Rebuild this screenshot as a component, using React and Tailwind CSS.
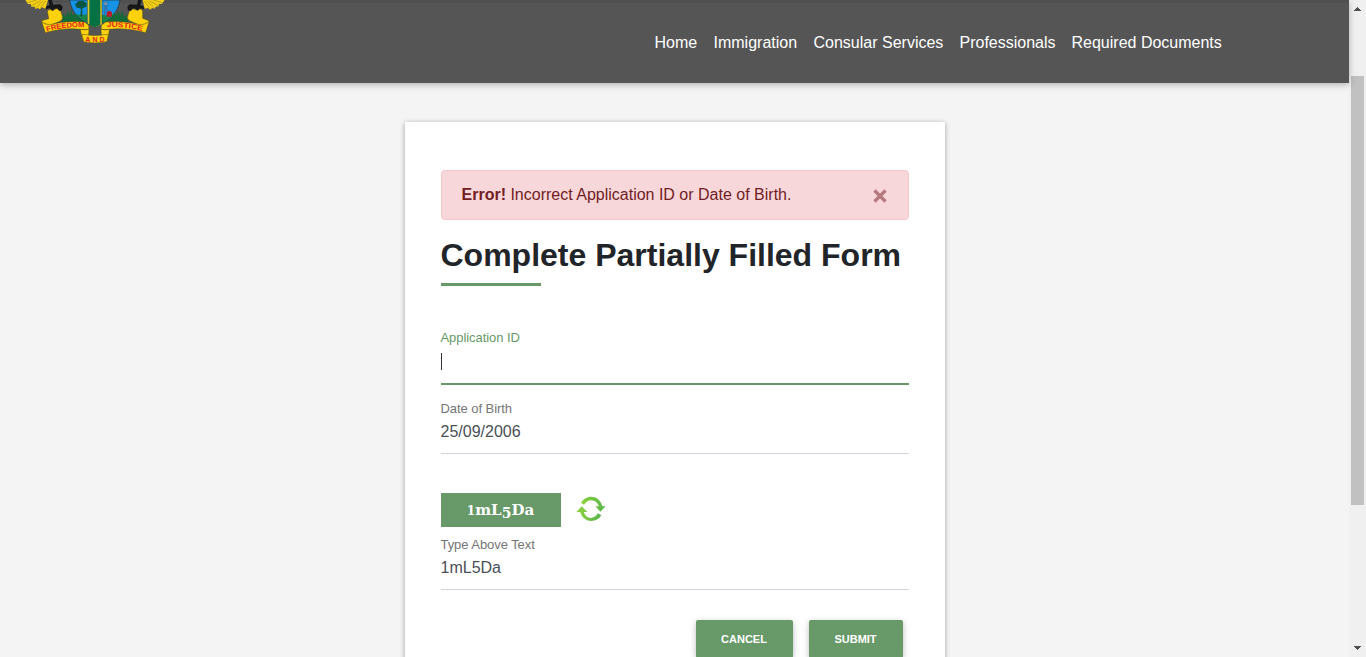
const NAV = [
  ['Home', 'w-[43px]'],
  ['Immigration', 'w-[84px]'],
  ['Consular Services', 'w-[130px]'],
  ['Professionals', 'w-[96px]'],
  ['Required Documents', 'w-[150px]'],
];

function Emblem() {
  return (
    <svg className="block h-[50px] w-[200px] shrink-0" viewBox="0 0 600 150">
      <defs>
        <path id="arcLeft" d="M141 95Q196 78 258 82" />
        <path id="arcRight" d="M320 80Q376 80 436 95" />
      </defs>
      <g id="wings">
        <path d="M76 0H144L136 26L126 22L120 28L113 24L106 27L104 20L94 20L93 13L84 12Z" fill="#f2cf16" />
        <path d="M84 8L110 0M95 17L122 2M107 24L130 2M121 25L137 3" stroke="#8a7a18" strokeWidth="1.5" />
        <path d="M494 0H428L434 26L444 24L450 29L457 24L464 26L467 20L476 19L477 12L486 11Z" fill="#f2cf16" />
        <path d="M486 8L460 0M475 17L448 2M463 24L440 2M449 25L433 3" stroke="#8a7a18" strokeWidth="1.5" />
      </g>
      <path d="M186 62L190 40L197 52L204 30L207 47L216 26L216 46L229 38L262 64L254 70H186Z" fill="#126b39" />
      <path d="M384 64L380 42L373 53L366 30L362 47L353 29L352 46L340 38L310 64L320 70H384Z" fill="#126b39" />
      <path d="M209 0H360Q356 30 332 54Q312 67 285 82Q256 68 237 54Q213 31 209 0Z" fill="#1592e6" stroke="#262c2b" strokeWidth="2" />
      <path d="M224 41Q244 47 262 43V68L238 53Z" fill="#178447" />
      <path d="M306 45Q324 47 345 40Q330 60 306 70Z" fill="#178447" />
      <path d="M241 49L243 26L228 22L226 12L235 3L249 2L260 10L259 20L247 25L247 49Z" fill="#0b5543" />
      <path d="M262 0H306V73L285 82L262 70Z" fill="#dfc629" />
      <path d="M268 0H301V74L285 82L268 74Z" fill="#087143" />
      <path d="M262 0V70M306 0V70" stroke="#243a32" strokeWidth="1.5" />
      <path d="M313 46L316 17H319L323 46M310 4L325 18M325 4L310 18" fill="none" stroke="#425d80" strokeWidth="2.5" />
      <circle cx="317" cy="11" r="5" fill="#7890a4" />
      <path d="M320 50V37L328 32L336 36V50Z" fill="#b91e30" />
      <g fill="#fdd20c" stroke="#514818" strokeWidth="1.5" strokeLinejoin="round">
        <path d="M142 32Q152 25 159 32Q170 21 181 31L187 48Q190 58 180 64L148 77L128 69L124 62L146 56Z" />
        <path d="M428 32Q418 22 410 30Q396 23 388 33L383 49Q379 58 392 64L422 77L441 71L448 63L428 55Z" />
        <path d="M124 62Q133 76 155 73Q200 61 254 66L266 76L267 87Q262 91 243 88Q195 82 136 98Z" />
        <path d="M448 63Q437 76 414 73Q369 61 317 66L304 76L303 87Q309 91 326 88Q378 82 437 98Z" />
        <path d="M241 88Q258 92 267 87L266 106L248 118Q243 103 241 88Z" />
        <path d="M328 88Q311 92 303 87L304 106L323 118Q327 103 328 88Z" />
        <path d="M246 103Q285 110 325 103L321 125Q285 132 251 126Z" />
      </g>
      <path d="M145 0H156L159 14L181 13L188 20L186 31L178 33L171 25L164 26L157 32L149 25L137 28L140 18L149 16Z" fill="#151719" />
      <path d="M425 0H414L411 14L389 13L382 20L384 31L392 33L399 25L406 26L413 32L421 25L433 28L430 18L421 16Z" fill="#151719" />
      <g fill="#df251f" fontFamily="Liberation Sans, sans-serif" fontWeight="700">
        <text fontSize="22"><textPath href="#arcLeft" textLength="113" lengthAdjust="spacingAndGlyphs">FREEDOM</textPath></text>
        <text fontSize="22"><textPath href="#arcRight" textLength="108" lengthAdjust="spacingAndGlyphs">JUSTICE</textPath></text>
        <text x="256" y="125" fontSize="21" textLength="58">AND</text>
      </g>
    </svg>
  );
}

function Refresh() {
  return (
    <svg className="-mt-[2px] h-[28px] w-[30px]" viewBox="0 0 90 84">
      <defs>
        <linearGradient id="leaf" x2="1">
          <stop stopColor="#90d23d" />
          <stop offset="1" stopColor="#55b54b" />
        </linearGradient>
      </defs>
      <g fill="url(#leaf)">
        <path d="M15 24C29 -3 70 -1 79 34H89L73 50L58 34H69C61 12 37 10 24 29Z" />
        <path d="M76 61C62 86 21 84 13 51H1L17 34L34 51H23C31 74 54 74 66 55Z" />
      </g>
    </svg>
  );
}

function Field({ label, value, active }) {
  return (
    <div className={active ? 'h-[56px] border-b-2 border-[#689968]' : 'h-[54px] border-b border-[#ced4da]'}>
      <label className={`block text-[13px] leading-[18px] tracking-[-0.06px] ${active ? 'text-[#689968]' : 'text-[#757575]'}`}>{label}</label>
      <div className="flex h-[28px] items-center text-[16px] text-[#495057]">
        {active ? <span className="mt-px h-[17px] w-px bg-[#30363c]" /> : value}
      </div>
    </div>
  );
}

function Button({ children, width }) {
  return (
    <button className={`${width} h-[38px] rounded-[2px] bg-[#689968] text-[11px] font-bold text-white shadow-[0_2px_5px_0_rgba(0,0,0,0.16),0_2px_10px_0_rgba(0,0,0,0.12)]`}>
      {children}
    </button>
  );
}

export default function App() {
  return (
    <div className="flex h-[657px] overflow-hidden bg-[#f4f4f4] font-['Liberation_Sans',Arial,sans-serif]">
      <div className="flex w-[1349px] flex-col">
        <header className="z-10 flex h-[83px] shrink-0 justify-between border-t-[3px] border-[#505050] bg-[#555] shadow-[0_2px_5px_0_rgba(0,0,0,0.16),0_2px_10px_0_rgba(0,0,0,0.12)]">
          <div className="-mt-[3px]"><Emblem /></div>
          <nav className="mr-[127.5px] flex h-[80px] items-center gap-4 text-[16px] text-white">
            {NAV.map(([label, width]) => (
              <a key={label} className={`${width} whitespace-nowrap`}>{label}</a>
            ))}
          </nav>
        </header>
        <main className="mx-auto mt-[39px] flex h-[600px] w-[540px] shrink-0 flex-col bg-white px-9 pt-12 shadow-[0_1px_5px_rgba(0,0,0,0.35)]">
          <div className="flex h-[50px] shrink-0 items-center justify-between rounded-[4px] border border-[#f5c6cb] bg-[#f8d7da] pl-5 pr-[21px] text-[16px] text-[#721c24]">
            <p className="pb-px"><strong>Error!</strong> Incorrect Application ID or Date of Birth.</p>
            <svg className="mt-[2px] size-[14px] opacity-50" viewBox="0 0 14 14" role="img" aria-label="Close">
              <path d="M1.5 1.5L12.5 12.5M12.5 1.5L1.5 12.5" stroke="#721c24" strokeWidth="3.2" />
            </svg>
          </div>
          <h1 className="mt-[15px] h-[40px] whitespace-nowrap text-[32px] font-bold leading-[40px] text-[#212529]">Complete Partially Filled Form</h1>
          <div className="mt-[8px] h-[3px] w-[100px] bg-[#689968]" />
          <div className="mt-[43px]"><Field label="Application ID" active /></div>
          <div className="mt-[15px]"><Field label="Date of Birth" value="25/09/2006" /></div>
          <div className="mt-[39px] flex items-center gap-[15px]">
            <div className="flex h-[34px] w-[120px] items-center justify-center bg-[#689968] text-white">
              <span className="font-['DejaVu_Serif',serif] text-[15px] font-bold leading-5"><span className="text-[12px]">1</span>mL<span className="relative top-[3px] text-[14px]">5</span>Da</span>
            </div>
            <Refresh />
          </div>
          <div className="mt-[9px]"><Field label="Type Above Text" value="1mL5Da" /></div>
          <div className="mr-[6px] mt-[30px] flex justify-end gap-4">
            <Button width="w-[97px]">CANCEL</Button>
            <Button width="w-[94px]">SUBMIT</Button>
          </div>
        </main>
      </div>
      <aside className="flex w-[17px] flex-col items-center bg-[#f0f0f0]">
        <svg className="mt-[7px] h-[4px] w-[7px]" viewBox="0 0 7 4" shapeRendering="crispEdges"><path d="M3 0h1v1h1v1h1v1h1v1H0V3h1V2h1V1h1z" fill="#505050" /></svg>
        <div className="mt-[65px] h-[429px] w-[13px] bg-[#c1c1c1]" />
        <svg className="mt-[141px] h-[4px] w-[7px]" viewBox="0 0 7 4" shapeRendering="crispEdges"><path d="M0 0h7v1H6v1H5v1H4v1H3V3H2V2H1V1H0z" fill="#505050" /></svg>
      </aside>
    </div>
  );
}
